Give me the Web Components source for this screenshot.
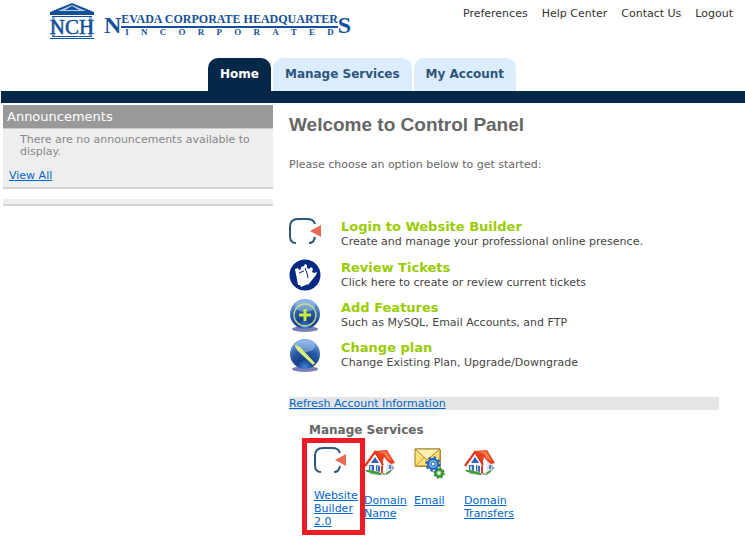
<!DOCTYPE html>
<html lang="en">
<head>
<meta charset="utf-8">
<title>Control Panel</title>
<style>
  body {
    margin: 0;
    background: #fff;
    font-family: Verdana, "DejaVu Sans", sans-serif;
    font-size: 11px;
    line-height: 13px;
    color: #666;
  }
</style>
</head>
<body>
<control-panel></control-panel>

<script>
const ball = `
  <defs>
    <radialGradient id="ball" cx=".5" cy=".95" r=".95">
      <stop stop-color="#3f86d6"/>
      <stop offset=".3" stop-color="#173f88"/>
      <stop offset=".6" stop-color="#2a5ba6"/>
      <stop offset="1" stop-color="#7fb0e6"/>
    </radialGradient>
  </defs>
  <ellipse cx="16" cy="30" rx="13" ry="3" fill="#7b7fb8"/>
  <circle cx="16" cy="15" r="15" fill="url(#ball)"/>
  <ellipse cx="16" cy="7" rx="10" ry="6" fill="#b9d8f6" opacity=".45"/>`;

// Drawings shared by the shortcut list and the service grid
const icons = {
  builder: `
    <svg viewBox="0 0 32 27" width="32" height="27" fill="none">
      <path d="M7 25C3 25 1 22 1 18V9C1 4 4 1 9 1h9c4 0 7 1 8 5M26 19c-1 4-2 6-6 6" stroke="#2f5878" stroke-width="2"/>
      <path d="M21 13l11-6v12z" fill="#e96b54"/>
    </svg>`,
  tickets: `
    <svg viewBox="0 0 32 32" width="32" height="32">
      <circle cx="16" cy="16" r="15.5" fill="#062a83"/>
      <path d="M6 10l3-1 1 2 2-1 0-2 3-1 6 15-2 1 0 2-7 3-1-2-2 0z" fill="#fff"/>
      <path d="M16 5l2 1 0 3 2 1 2-2 2 2-1 3 2 1 3-1-1 3-8 10-7-13z" fill="#fff"/>
      <path d="M16 9l2 5 1 5M10 14l5-2" stroke="#062a83" fill="none"/>
    </svg>`,
  add: `
    <svg viewBox="0 0 32 34" width="32" height="34">
      ${ball}
      <circle cx="16" cy="16" r="11" fill="none" stroke="#c3dc8d" stroke-width="1.3"/>
      <path d="M16 10v12M10 16h12" stroke="#c5ec3c" stroke-width="3"/>
    </svg>`,
  change: `
    <svg viewBox="0 0 32 34" width="32" height="34">
      ${ball}
      <path d="M7 7l4 2 14 15-1 1L9 11z" fill="#dcef7b" stroke="#dcef7b" stroke-width="1.5"/>
    </svg>`,
  house: `
    <svg viewBox="0 0 32 32" width="32" height="32">
      <path d="M5 26l17 1 9-7-5-4z" fill="#a9a9a9"/>
      <path d="M19 14l7-3 2 4v7l-7 4-3-1z" fill="#dfe4ee" stroke="#8c97b3" stroke-width=".7"/>
      <path d="M3 17l8-12 8 12v9l-16-3z" fill="#fff"/>
      <path d="M11 3l12-1 8 13-4 1-5-4-1 14-4-1V15z" fill="#e8401f"/>
      <path d="M14 4l8-1 6 10-5-2-3-5z" fill="#fa7a4e"/>
      <path d="M20 9l3 4-1 13-3-1V13z" fill="#fff"/>
      <path d="M26 17v4" stroke="#5d7db8" stroke-width="2"/>
      <path d="M1 18L11 4l8 13" fill="none" stroke="#e03a1c" stroke-width="2.2"/>
      <path d="M3 19l8-12 7 11" fill="none" stroke="#fff" stroke-width=".7"/>
      <path d="M7 15l4-6 4 6z" fill="#3064bb"/>
      <path d="M5 17h5v6l-5-1zM12 17l4 1v6l-4-1z" fill="#3a68b4"/>
      <path d="M6 18h2v4H6zM13 18h1v5h-1z" fill="#b9d3f2"/>
      <path d="M1 22l4 0 10 2 3 2-2 1-13-3zM22 25l5-3 0 2-5 3z" fill="#3b9e36"/>
    </svg>`,
  mail: `
    <svg viewBox="0 0 32 32" width="32" height="32">
      <path d="M1 2h26v17H1z" fill="#b59b55"/>
      <path d="M1 1h25v17H1z" fill="#ffe277" stroke="#9a7d26"/>
      <path d="M1 18l9-8M26 18l-9-8" stroke="#c59b31"/>
      <path d="M1 1l12 11L26 1z" fill="#fff0b0" stroke="#a2822b"/>
      <circle cx="25" cy="25" r="3.7" fill="#7ecb64" stroke="#2f8b2b" stroke-width="2"/>
      <circle cx="25" cy="25" r="5" fill="none" stroke="#2f8b2b" stroke-width="1.5" stroke-dasharray="2 1.9"/>
      <circle cx="25" cy="25" r="1.5" fill="#fff"/>
      <circle cx="19" cy="16" r="5" fill="#70b1ee" stroke="#2562b4" stroke-width="2"/>
      <circle cx="19" cy="16" r="6.7" fill="none" stroke="#2562b4" stroke-width="2" stroke-dasharray="2.6 2.7"/>
      <circle cx="19" cy="16" r="2" fill="#fff" stroke="#2562b4"/>
    </svg>`,
};

function define(name, html, setup) {
  const template = document.createElement("template");
  template.innerHTML = html;
  customElements.define(name, class extends HTMLElement {
    constructor() {
      super();
      this.attachShadow({ mode: "open" });
      this.shadowRoot.appendChild(template.content.cloneNode(true));
    }
    connectedCallback() {
      if (setup) setup(this, this.shadowRoot);
    }
  });
}

class PanelIcon extends HTMLElement {
  constructor() {
    super();
    this.attachShadow({ mode: "open" });
  }
  static get observedAttributes() {
    return ["name"];
  }
  attributeChangedCallback(name, oldValue, newValue) {
    this.shadowRoot.innerHTML = `
      <style>
        :host { display: block; }
        svg { display: block; }
      </style>
      ${icons[newValue]}
    `;
  }
}
customElements.define("panel-icon", PanelIcon);

define("brand-logo", `
  <style>
    :host {
      display: flex;
      align-items: flex-start;
      gap: 9px;
      color: #155098;
      font-family: "Liberation Serif", serif;
      font-weight: bold;
    }
    svg { display: block; }
    .mark { display: flex; padding-top: 11px; }
    .initial { font-size: 24px; line-height: 24px; }
    .name { font-size: 12px; line-height: 13px; white-space: nowrap; }
    .rule { height: 2px; background: #155098; }
    .suffix {
      display: flex;
      justify-content: space-between;
      padding: 0 4px;
      font-size: 9px;
      line-height: 9px;
    }
  </style>
  <svg viewBox="0 0 46 38" width="46" height="38" fill="#155098">
    <path d="M23 1l22 9v3H1v-3z"/>
    <path d="M23 3l14 6H9z" fill="#b9cfe5"/>
    <path d="M23 4l7 4H16z"/>
    <path d="M3 14h40v1H3zM3 34h40v1H3zM1 36h44v1H1z"/>
    <path d="M3 15h3v19H3zM40 15h3v19h-3z" fill="#8dafd3"/>
    <text x="23" y="32" text-anchor="middle" font-size="21" font-weight="normal" stroke="#155098" stroke-width=".5">NCH</text>
  </svg>
  <div class="mark">
    <span class="initial">N</span>
    <div>
      <div class="name">EVADA CORPORATE HEADQUARTER</div>
      <div class="rule"></div>
      <div class="suffix">
        <span>I</span><span>N</span><span>C</span><span>O</span><span>R</span><span>P</span><span>O</span><span>R</span><span>A</span><span>T</span><span>E</span><span>D</span>
      </div>
    </div>
    <span class="initial">S</span>
  </div>
`);

define("nav-link", `
  <style>
    :host { display: block; }
    a { color: #333; text-decoration: none; white-space: nowrap; }
  </style>
  <a href="#"><slot></slot></a>
`);

define("nav-tab", `
  <style>
    :host { display: block; }
    a {
      display: block;
      padding: 9px 12px;
      border-radius: 10px 10px 0 0;
      background: #dbedff;
      color: #2f547a;
      font-size: 12px;
      font-weight: bold;
      line-height: 15px;
      text-decoration: none;
      white-space: nowrap;
    }
    :host([active]) a { background: #052849; color: #fff; }
  </style>
  <a href="#"><slot></slot></a>
`);

define("side-box", `
  <style>
    :host {
      display: block;
      border-bottom: 2px solid #d5d5d5;
      background: #eee;
      color: #888;
    }
    h2 {
      margin: 0;
      padding: 4px;
      border-bottom: 1px solid #ccc;
      background: #999;
      color: #fff;
      font-size: 13px;
      font-weight: normal;
      line-height: 15px;
    }
    .body { padding: 5px 6px; line-height: 12px; }
    .empty { height: 5px; }
  </style>
  <h2></h2>
  <div class="body"><slot></slot></div>
`, (el, root) => {
  const heading = el.getAttribute("heading");
  if (heading) {
    root.querySelector("h2").textContent = heading;
  } else {
    root.querySelector("h2").remove();
    root.querySelector(".body").className = "empty";
  }
});

define("shortcut-item", `
  <style>
    :host { display: flex; gap: 20px; min-height: 40px; color: #444; }
    panel-icon { flex: 0 0 32px; }
    h3 { margin: 0; font-size: 13px; line-height: 17px; }
    h3 a { color: #9c0; text-decoration: none; }
    p { margin: 0; font-size: 11px; line-height: 13px; }
  </style>
  <panel-icon></panel-icon>
  <div>
    <h3><a href="#"></a></h3>
    <p><slot></slot></p>
  </div>
`, (el, root) => {
  root.querySelector("panel-icon").setAttribute("name", el.getAttribute("icon"));
  root.querySelector("a").textContent = el.getAttribute("heading");
});

define("service-item", `
  <style>
    :host { display: block; position: relative; }
    a { display: flex; flex-direction: column; gap: 14px; color: #06c; }
    :host([marked]) a { gap: 15px; }
    .frame { display: none; }
    /* the highlight lies over the neighbouring cells */
    :host([marked]) .frame {
      display: block;
      position: absolute;
      z-index: 1;
      inset: -9px -7px -7px -12px;
      border: 5px solid #ed1c24;
      pointer-events: none;
    }
  </style>
  <a href="#"><panel-icon></panel-icon><span><slot></slot></span></a>
  <div class="frame"></div>
`, (el, root) => {
  root.querySelector("panel-icon").setAttribute("name", el.getAttribute("icon"));
});

define("control-panel", `
  <style>
    :host { display: block; }
    header { display: flex; justify-content: space-between; padding: 2px 12px 0 49px; }
    .links { display: flex; gap: 14px; padding-top: 5px; }
    .tabs {
      display: flex;
      gap: 2px;
      margin: 18px 0 0 1px;
      padding-left: 207px;
      border-bottom: 12px solid #052849;
    }
    .columns { display: grid; grid-template-columns: 270px 1fr; gap: 16px; padding: 2px 26px 0 3px; }
    aside { display: flex; flex-direction: column; gap: 10px; }
    .note { margin: 0 8px 12px 11px; }
    a { color: #06c; }
    h1 {
      margin: 8px 0 0;
      font-family: "Liberation Sans", Arial, sans-serif;
      font-size: 19px;
      line-height: 24px;
    }
    .intro { margin: 21px 0 47px; }
    .shortcuts { display: grid; grid-template-rows: 41px; }
    .refresh { margin-top: 18px; background: #e5e5e5; }
    .services { padding: 13px 0 12px 20px; }
    h2 { margin: 0 0 9px; font-size: 12px; line-height: 15px; }
    .grid { display: grid; grid-template-columns: repeat(4, 50px); align-items: start; padding-left: 5px; }
    service-item[marked] { width: 44px; }
    service-item:not([marked]) { padding-top: 1px; }
  </style>
  <header>
    <brand-logo></brand-logo>
    <nav class="links">
      <nav-link>Preferences</nav-link>
      <nav-link>Help Center</nav-link>
      <nav-link>Contact Us</nav-link>
      <nav-link>Logout</nav-link>
    </nav>
  </header>
  <nav class="tabs">
    <nav-tab active>Home</nav-tab>
    <nav-tab>Manage Services</nav-tab>
    <nav-tab>My Account</nav-tab>
  </nav>
  <div class="columns">
    <aside>
      <side-box heading="Announcements">
        <p class="note">There are no announcements available to display.</p>
        <a href="#">View All</a>
      </side-box>
      <side-box></side-box>
    </aside>
    <main>
      <h1>Welcome to Control Panel</h1>
      <p class="intro">Please choose an option below to get started:</p>
      <div class="shortcuts">
        <shortcut-item icon="builder" heading="Login to Website Builder">Create and manage your professional online presence.</shortcut-item>
        <shortcut-item icon="tickets" heading="Review Tickets">Click here to create or review current tickets</shortcut-item>
        <shortcut-item icon="add" heading="Add Features">Such as MySQL, Email Accounts, and FTP</shortcut-item>
        <shortcut-item icon="change" heading="Change plan">Change Existing Plan, Upgrade/Downgrade</shortcut-item>
      </div>
      <div class="refresh"><a href="#">Refresh Account Information</a></div>
      <section class="services">
        <h2>Manage Services</h2>
        <div class="grid">
          <service-item icon="builder" marked>Website Builder 2.0</service-item>
          <service-item icon="house">Domain Name</service-item>
          <service-item icon="mail">Email</service-item>
          <service-item icon="house">Domain Transfers</service-item>
        </div>
      </section>
    </main>
  </div>
`);
</script>
</body>
</html>
